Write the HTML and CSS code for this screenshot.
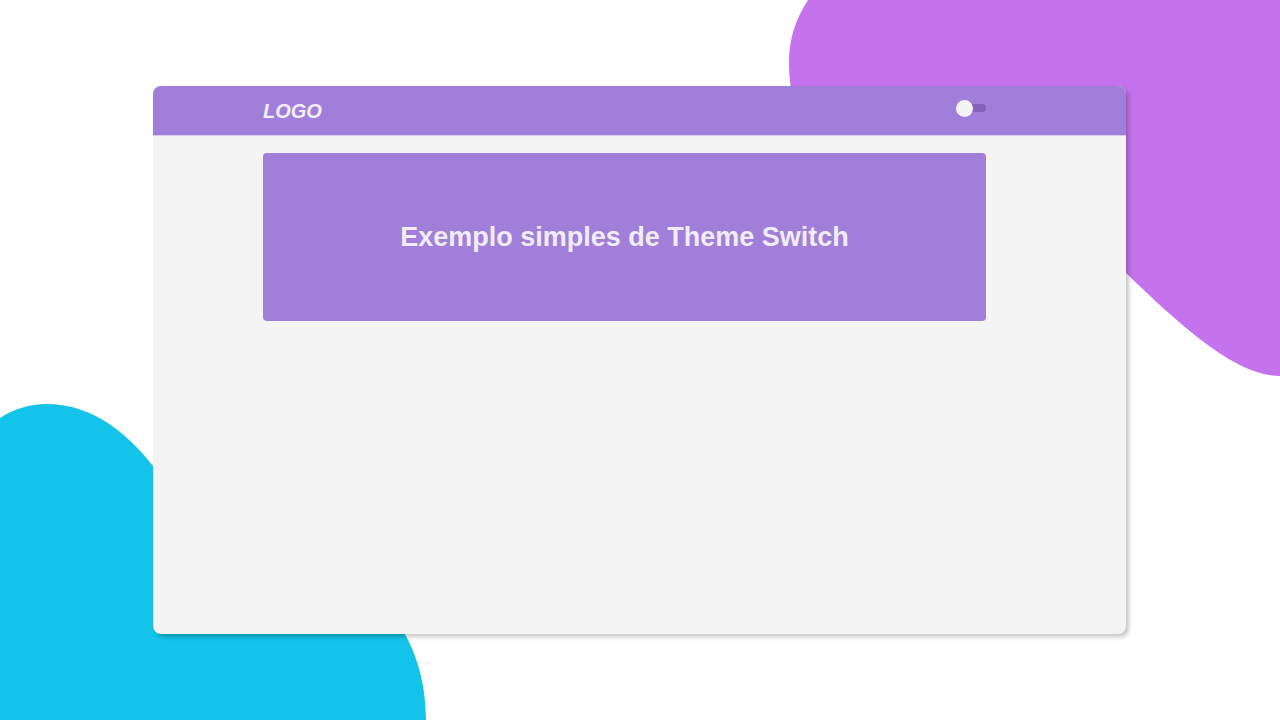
FILE: index.html
```html
<!DOCTYPE html>
<html lang="pt-BR">
<head>
<meta charset="utf-8">
<title>Theme Switch</title>
<link rel="stylesheet" href="styles.css">
</head>
<body>
<div class="stage">
  <svg class="blobs" width="1280" height="720" viewBox="0 0 1280 720" aria-hidden="true">
    <path class="blob-purple" d="M808,0 L1280,0 L1280,376 C1235,376 1180,325 1126,273 C1050,200 900,180 830,150 C795,130 789,90 789,62 C789,40 795,20 808,0 Z"/>
    <path class="blob-cyan" d="M0,418 C14,409 30,404 46,404 C95,404 130,435 160,475 C330,540 426,600 426,720 L0,720 Z"/>
  </svg>
  <div class="window">
    <header class="topbar">
      <span class="logo">LOGO</span>
      <div class="toggle"><span class="track"></span><span class="knob"></span></div>
    </header>
    <main class="content">
      <section class="banner">
        <h1 class="title">Exemplo simples de Theme Switch</h1>
      </section>
    </main>
  </div>
</div>
</body>
</html>
```
FILE: styles.css
```css
* { box-sizing: border-box; }
html, body { margin: 0; padding: 0; background: #ffffff; }
body { font-family: "Liberation Sans", Arial, sans-serif; }

.stage {
  position: relative;
  width: 1280px;
  height: 720px;
  overflow: hidden;
  padding: 86px 0 0 153px;
}

.blobs { position: absolute; left: 0; top: 0; z-index: 0; }
.blob-purple { fill: #c473ec; }
.blob-cyan { fill: #13c3e9; }

.window {
  position: relative;
  z-index: 1;
  width: 973px;
  height: 548px;
  background: #f4f4f4;
  border-radius: 8px;
  box-shadow: 3px 3px 4px rgba(0, 0, 0, 0.22);
  overflow: hidden;
  display: flex;
  flex-direction: column;
}

.topbar {
  height: 50px;
  flex: 0 0 50px;
  background: #a07ed9;
  border-bottom: 1px solid #d9cbf0;
  display: flex;
  align-items: center;
  justify-content: space-between;
  padding: 0 140px 0 110px;
}

.logo {
  color: #f3eef9;
  font-weight: bold;
  font-style: italic;
  font-size: 20px;
  line-height: 24px;
  margin-top: 1px;
}

.toggle {
  position: relative;
  width: 30px;
  height: 17px;
  margin-bottom: 5px;
}
.track {
  position: absolute;
  right: 0;
  top: 4.5px;
  width: 22px;
  height: 8px;
  border-radius: 4px;
  background: #8660bb;
}
.knob {
  position: absolute;
  left: 0;
  top: 0;
  width: 17px;
  height: 17px;
  border-radius: 50%;
  background: #f4f4f4;
}

.content {
  flex: 1;
  padding: 17px 140px 0 110px;
}

.banner {
  height: 168px;
  background: #a07ed9;
  border-radius: 4px;
  display: flex;
  align-items: center;
  justify-content: center;
}

.title {
  margin: 0;
  color: #f1ecf8;
  font-size: 27px;
  font-weight: bold;
  line-height: 32px;
}
```
